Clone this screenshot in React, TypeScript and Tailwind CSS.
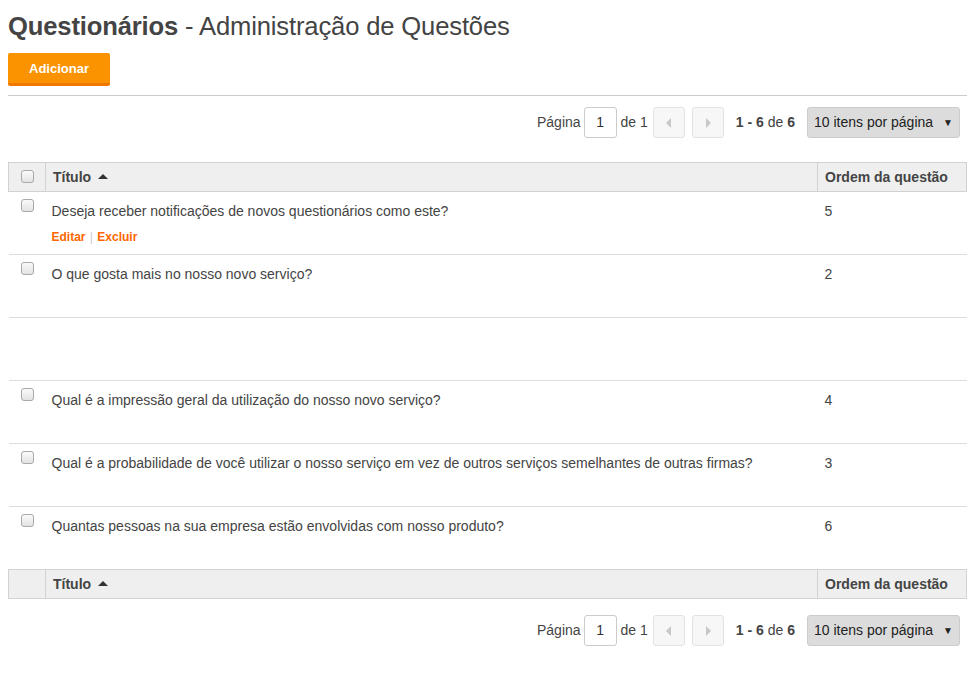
import React from "react";

const ROWS = [
  { title: "Deseja receber notificações de novos questionários como este?", order: "5", actions: true },
  { title: "O que gosta mais no nosso novo serviço?", order: "2" },
  { title: "", order: "", empty: true },
  { title: "Qual é a impressão geral da utilização do nosso novo serviço?", order: "4" },
  { title: "Qual é a probabilidade de você utilizar o nosso serviço em vez de outros serviços semelhantes de outras firmas?", order: "3" },
  { title: "Quantas pessoas na sua empresa estão envolvidas com nosso produto?", order: "6" },
];

function Checkbox() {
  return (
    <span className="inline-block w-[13px] h-[13px] rounded-[3px] border border-[#a9a9a9] bg-gradient-to-b from-[#fafafa] to-[#e3e3e3]" />
  );
}

function Caret({ dir }: { dir: "left" | "right" }) {
  return (
    <svg width="6" height="10" viewBox="0 0 6 10">
      {dir === "left" ? <path d="M5 0 L0 5 L5 10 Z" fill="#c8c8c8" /> : <path d="M1 0 L6 5 L1 10 Z" fill="#c8c8c8" />}
    </svg>
  );
}

function Pager() {
  return (
    <div className="flex justify-end items-center pr-[7px] text-[14px] text-[#444]">
      <span>Página</span>
      <span className="ml-[3px] w-[33px] h-[31px] border border-[#ccc] rounded-[3px] flex items-center justify-center text-[#333] bg-white">1</span>
      <span className="ml-1">de 1</span>
      <span className="ml-[5px] w-[32px] h-[31px] border border-[#e2e2e2] rounded-[3px] bg-[#f7f7f7] flex items-center justify-center">
        <Caret dir="left" />
      </span>
      <span className="ml-[7px] w-[32px] h-[31px] border border-[#e2e2e2] rounded-[3px] bg-[#f7f7f7] flex items-center justify-center">
        <Caret dir="right" />
      </span>
      <span className="ml-3">
        <b className="font-bold">1 - 6</b> de <b className="font-bold">6</b>
      </span>
      <span className="ml-3 w-[153px] h-[31px] border border-[#ccc] rounded-[3px] bg-[#dcdcdc] flex items-center justify-between pl-[6px] pr-[6px] text-[#222]">
        <span>10 itens por página</span>
        <span className="text-[10px]">▼</span>
      </span>
    </div>
  );
}

function HeaderRow({ withCheckbox }: { withCheckbox: boolean }) {
  return (
    <tr className="bg-[#efefef] h-[29px]">
      <td className="w-[37px] border border-[#d2d2d2] text-center align-middle pt-[3px]">
        {withCheckbox && <Checkbox />}
      </td>
      <td className="border border-[#d2d2d2] px-[7px] font-bold text-[#444]">
        Título
        <span className="inline-block ml-[7px] mb-[2px] align-middle w-0 h-0 border-l-[5px] border-r-[5px] border-b-[5px] border-l-transparent border-r-transparent border-b-[#333]" />
      </td>
      <td className="w-[149px] border border-[#d2d2d2] px-[7px] font-bold text-[#444]">Ordem da questão</td>
    </tr>
  );
}

export default function App() {
  return (
    <div className="bg-white min-h-[679px] px-2 pt-[8px] text-[#444]" style={{ fontFamily: '"Liberation Sans", Arial, sans-serif' }}>
      <h1 className="text-[25.6px] leading-[36px] text-[#444] tracking-[-0.15px]">
        <span className="font-bold">Questionários</span> - Administração de Questões
      </h1>
      <button className="mt-[9px] w-[102px] h-[33px] bg-[#fb9300] border-b-[3px] border-[#f07800] rounded-[2px] text-white font-bold text-[13px] pt-[2px]">
        Adicionar
      </button>
      <div className="mt-[9px] border-t border-[#ccc]" />
      <div className="mt-[11px]">
        <Pager />
      </div>
      <table className="mt-[24px] w-full border-collapse text-[14px] table-fixed">
        <colgroup>
          <col className="w-[37px]" />
          <col />
          <col className="w-[149px]" />
        </colgroup>
        <thead>
          <HeaderRow withCheckbox />
        </thead>
        <tbody>
          {ROWS.map((r, i) => (
            <tr key={i} className="h-[63px] border-b border-[#ddd] align-top">
              <td className="text-center pt-[5px]">{!r.empty && <Checkbox />}</td>
              <td className="pl-[6px] pt-[9px] text-[#444]">
                <div className="leading-[20px]">{r.title}</div>
                {r.actions && (
                  <div className="mt-[8px] text-[12px] font-bold text-[#f60] leading-[16px]">
                    Editar <span className="font-normal text-[#ccc] mx-[1px]">|</span> Excluir
                  </div>
                )}
              </td>
              <td className="pl-[7px] pt-[9px] leading-[20px]">{r.order}</td>
            </tr>
          ))}
        </tbody>
        <tfoot>
          <HeaderRow withCheckbox={false} />
        </tfoot>
      </table>
      <div className="mt-[16px]">
        <Pager />
      </div>
    </div>
  );
}
